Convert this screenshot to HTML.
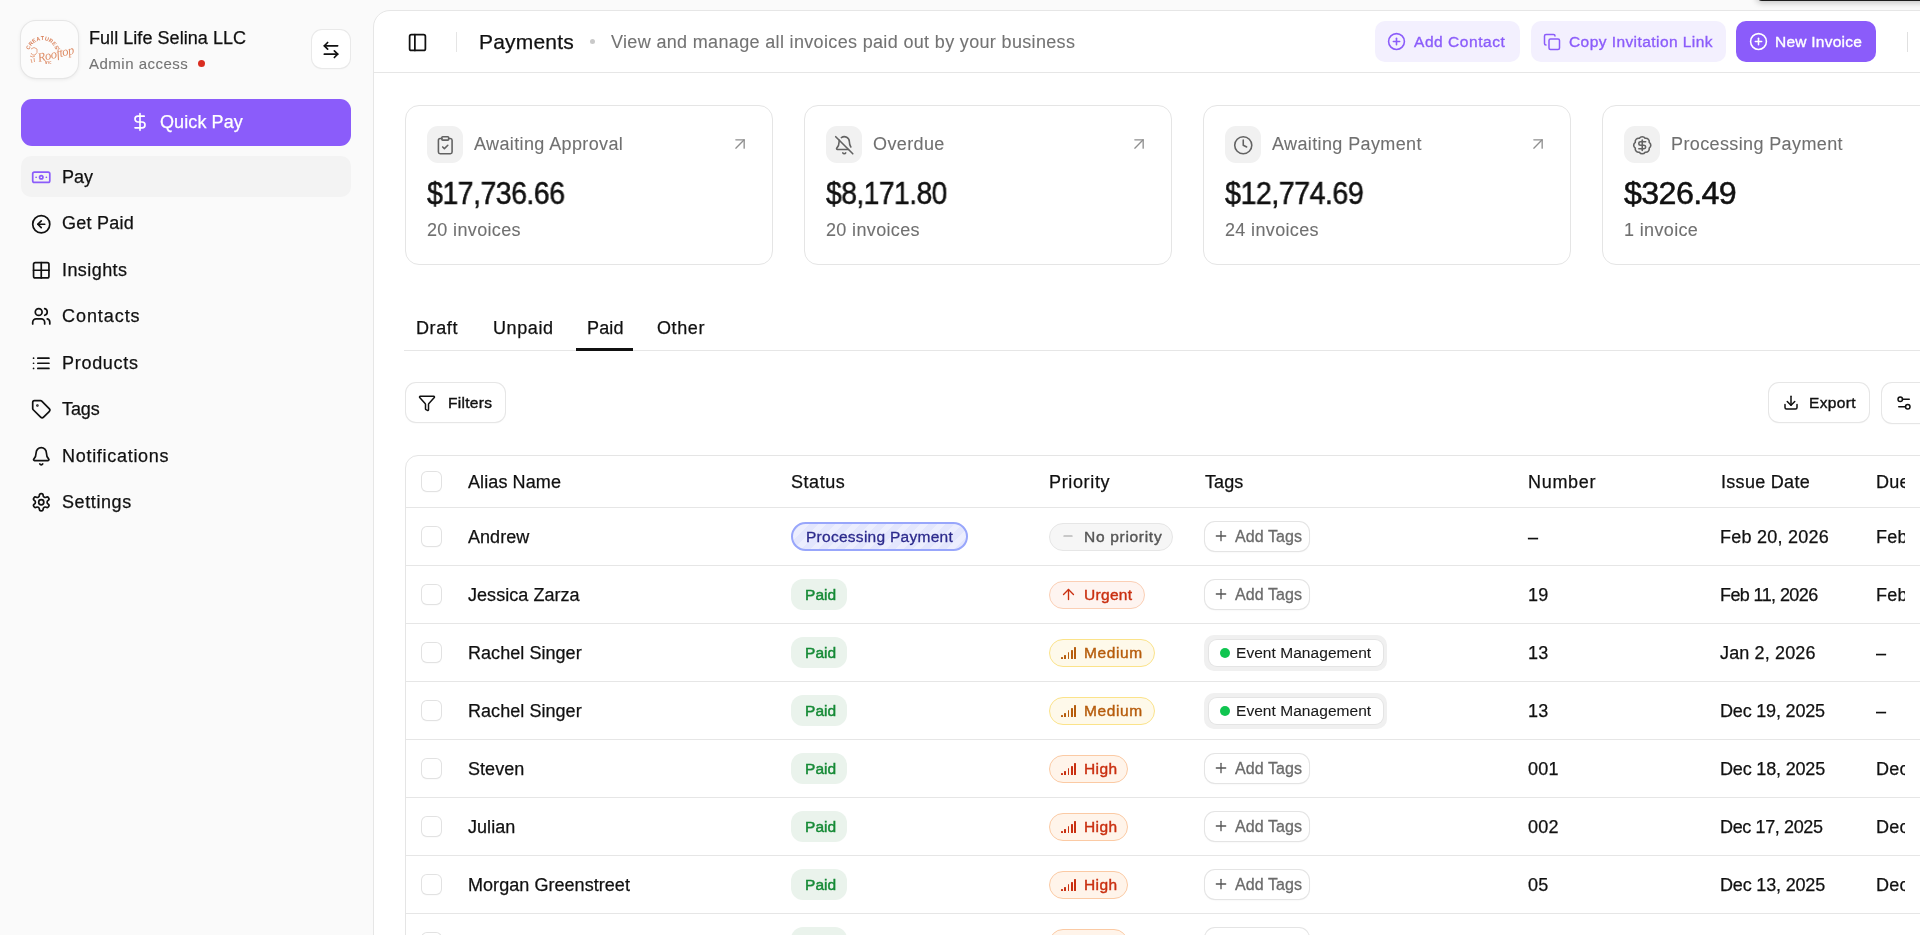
<!DOCTYPE html>
<html><head><meta charset="utf-8"><title>Payments</title>
<style>
html,body{margin:0;padding:0;}
body{width:1920px;height:935px;overflow:hidden;position:relative;background:#fafafa;font-family:"Liberation Sans", sans-serif;}
.a{position:absolute;}
.t{white-space:nowrap;will-change:transform;-webkit-text-stroke-width:0.25px;}
svg{display:block;}
</style></head><body>
<div class="a" style="left:21px;top:21px;width:57px;height:57px;background:#fcfcfc;border-radius:15px;box-shadow:0 0 0 1px #e6e6e6,0 1px 4px rgba(0,0,0,.10)"></div>
<div class="a" style="left:21px;top:21px;width:57px;height:57px;will-change:transform">
<svg width="57" height="57" viewBox="0 0 57 57">
<text x="9.10" y="27.15" transform="rotate(-66.7 9.10 27.15)" text-anchor="middle" font-family="Liberation Sans" font-weight="bold" font-size="5.4" fill="#d9805a">C</text>
<text x="11.16" y="23.82" transform="rotate(-50.0 11.16 23.82)" text-anchor="middle" font-family="Liberation Sans" font-weight="bold" font-size="5.4" fill="#d9805a">R</text>
<text x="14.08" y="21.22" transform="rotate(-33.3 14.08 21.22)" text-anchor="middle" font-family="Liberation Sans" font-weight="bold" font-size="5.4" fill="#d9805a">E</text>
<text x="17.63" y="19.57" transform="rotate(-16.7 17.63 19.57)" text-anchor="middle" font-family="Liberation Sans" font-weight="bold" font-size="5.4" fill="#d9805a">A</text>
<text x="21.50" y="19.00" transform="rotate(0.0 21.50 19.00)" text-anchor="middle" font-family="Liberation Sans" font-weight="bold" font-size="5.4" fill="#d9805a">T</text>
<text x="25.37" y="19.57" transform="rotate(16.7 25.37 19.57)" text-anchor="middle" font-family="Liberation Sans" font-weight="bold" font-size="5.4" fill="#d9805a">U</text>
<text x="28.92" y="21.22" transform="rotate(33.3 28.92 21.22)" text-anchor="middle" font-family="Liberation Sans" font-weight="bold" font-size="5.4" fill="#d9805a">R</text>
<text x="31.84" y="23.82" transform="rotate(50.0 31.84 23.82)" text-anchor="middle" font-family="Liberation Sans" font-weight="bold" font-size="5.4" fill="#d9805a">E</text>
<text x="33.90" y="27.15" transform="rotate(66.7 33.90 27.15)" text-anchor="middle" font-family="Liberation Sans" font-weight="bold" font-size="5.4" fill="#d9805a">S</text>
<text x="16.5" y="37.5" font-family="Liberation Serif" font-style="italic" font-size="12.5" fill="#de8d66" transform="rotate(-13 32 34)" letter-spacing="-0.4">Rooftop</text>
<path d="M10 28 q3 -3 6 0 q1 4 -2 6 q-3 1 -4 -2 M9 35 q3 2 5 0 M10 38 l1 4 M13 37 l0.5 4" fill="none" stroke="#e6a686" stroke-width="1"/>
<text x="24" y="43" font-family="Liberation Sans" font-weight="bold" font-size="3" fill="#d9805a">NYC</text>
</svg></div>
<div class="a t" style="left:89px;top:26.76px;font-size:18px;line-height:22px;color:#111;letter-spacing:0.05px;font-weight:400;">Full Life Selina LLC</div>
<div class="a t" style="left:89px;top:54.80px;font-size:15px;line-height:18px;color:#737373;letter-spacing:0.5px;font-weight:400;-webkit-text-stroke:0.1px #737373;">Admin access</div>
<div class="a" style="left:197.5px;top:59.5px;width:7.5px;height:7.5px;background:#d92d20;border-radius:50%"></div>
<div class="a" style="left:312px;top:30px;width:38px;height:38px;background:#fff;border-radius:10px;box-shadow:0 0 0 1px #e9e9e9,0 1px 2px rgba(0,0,0,.06)"></div>
<div class="a" style="left:321px;top:39.7px;width:20px;height:20px;color:#111"><svg width="20" height="20" viewBox="0 0 24 24" fill="none" stroke="currentColor" stroke-width="2" stroke-linecap="round" stroke-linejoin="round" ><path d="M8 3 4 7l4 4"/><path d="M4 7h16"/><path d="m16 21 4-4-4-4"/><path d="M20 17H4"/></svg></div>
<div class="a" style="left:21px;top:99px;width:330px;height:46.8px;background:#8b5cfa;border-radius:11px"></div>
<div class="a" style="left:130px;top:112px;width:20px;height:20px;color:#fff"><svg width="20" height="20" viewBox="0 0 24 24" fill="none" stroke="currentColor" stroke-width="2" stroke-linecap="round" stroke-linejoin="round" ><path d="M12 2v20"/><path d="M17 5H9.5a3.5 3.5 0 0 0 0 7h5a3.5 3.5 0 0 1 0 7H6"/></svg></div>
<div class="a t" style="left:160px;top:111.46px;font-size:18px;line-height:22px;color:#fff;letter-spacing:0.1px;font-weight:400;">Quick Pay</div>
<div class="a" style="left:21px;top:156px;width:330px;height:41px;background:#f3f3f3;border-radius:10px"></div>
<div class="a" style="left:31px;top:166.7px;width:20.5px;height:20.5px;color:#8b5cfa"><svg width="20.5" height="20.5" viewBox="0 0 24 24" fill="none" stroke="currentColor" stroke-width="2" stroke-linecap="round" stroke-linejoin="round" ><rect width="20" height="12" x="2" y="6" rx="2"/><circle cx="12" cy="12" r="2"/><path d="M6 12h.01M18 12h.01"/></svg></div>
<div class="a t" style="left:62px;top:165.96px;font-size:18px;line-height:22px;color:#111;letter-spacing:-0.05px;font-weight:400;">Pay</div>
<div class="a" style="left:31px;top:213.7px;width:20.5px;height:20.5px;color:#111"><svg width="20.5" height="20.5" viewBox="0 0 24 24" fill="none" stroke="currentColor" stroke-width="2" stroke-linecap="round" stroke-linejoin="round" ><circle cx="12" cy="12" r="10"/><path d="M16 12H8"/><path d="m12 8-4 4 4 4"/></svg></div>
<div class="a t" style="left:62px;top:212.42px;font-size:18px;line-height:22px;color:#111;letter-spacing:0.24px;font-weight:400;">Get Paid</div>
<div class="a" style="left:31px;top:259.7px;width:20.5px;height:20.5px;color:#111"><svg width="20.5" height="20.5" viewBox="0 0 24 24" fill="none" stroke="currentColor" stroke-width="2" stroke-linecap="round" stroke-linejoin="round" ><rect width="18" height="18" x="3" y="3" rx="2"/><path d="M3 12h18"/><path d="M12 3v18"/></svg></div>
<div class="a t" style="left:62px;top:258.88px;font-size:18px;line-height:22px;color:#111;letter-spacing:0.43px;font-weight:400;">Insights</div>
<div class="a" style="left:31px;top:305.7px;width:20.5px;height:20.5px;color:#111"><svg width="20.5" height="20.5" viewBox="0 0 24 24" fill="none" stroke="currentColor" stroke-width="2" stroke-linecap="round" stroke-linejoin="round" ><path d="M16 21v-2a4 4 0 0 0-4-4H6a4 4 0 0 0-4 4v2"/><circle cx="9" cy="7" r="4"/><path d="M22 21v-2a4 4 0 0 0-3-3.87"/><path d="M16 3.13a4 4 0 0 1 0 7.75"/></svg></div>
<div class="a t" style="left:62px;top:305.34px;font-size:18px;line-height:22px;color:#111;letter-spacing:0.94px;font-weight:400;">Contacts</div>
<div class="a" style="left:31px;top:352.7px;width:20.5px;height:20.5px;color:#111"><svg width="20.5" height="20.5" viewBox="0 0 24 24" fill="none" stroke="currentColor" stroke-width="2" stroke-linecap="round" stroke-linejoin="round" ><path d="M3 12h.01"/><path d="M3 18h.01"/><path d="M3 6h.01"/><path d="M8 12h13"/><path d="M8 18h13"/><path d="M8 6h13"/></svg></div>
<div class="a t" style="left:62px;top:351.80px;font-size:18px;line-height:22px;color:#111;letter-spacing:0.71px;font-weight:400;">Products</div>
<div class="a" style="left:31px;top:398.7px;width:20.5px;height:20.5px;color:#111"><svg width="20.5" height="20.5" viewBox="0 0 24 24" fill="none" stroke="currentColor" stroke-width="2" stroke-linecap="round" stroke-linejoin="round" ><path d="M12.586 2.586A2 2 0 0 0 11.172 2H4a2 2 0 0 0-2 2v7.172a2 2 0 0 0 .586 1.414l8.704 8.704a2.426 2.426 0 0 0 3.42 0l6.58-6.58a2.426 2.426 0 0 0 0-3.42z"/><circle cx="7.5" cy="7.5" r=".5" fill="currentColor"/></svg></div>
<div class="a t" style="left:62px;top:398.26px;font-size:18px;line-height:22px;color:#111;letter-spacing:-0.07px;font-weight:400;">Tags</div>
<div class="a" style="left:31px;top:445.7px;width:20.5px;height:20.5px;color:#111"><svg width="20.5" height="20.5" viewBox="0 0 24 24" fill="none" stroke="currentColor" stroke-width="2" stroke-linecap="round" stroke-linejoin="round" ><path d="M10.268 21a2 2 0 0 0 3.464 0"/><path d="M3.262 15.326A1 1 0 0 0 4 17h16a1 1 0 0 0 .74-1.673C19.41 13.956 18 12.499 18 8A6 6 0 0 0 6 8c0 4.499-1.411 5.956-2.738 7.326"/></svg></div>
<div class="a t" style="left:62px;top:444.72px;font-size:18px;line-height:22px;color:#111;letter-spacing:0.71px;font-weight:400;">Notifications</div>
<div class="a" style="left:31px;top:491.7px;width:20.5px;height:20.5px;color:#111"><svg width="20.5" height="20.5" viewBox="0 0 24 24" fill="none" stroke="currentColor" stroke-width="2" stroke-linecap="round" stroke-linejoin="round" ><path d="M12.22 2h-.44a2 2 0 0 0-2 2v.18a2 2 0 0 1-1 1.73l-.43.25a2 2 0 0 1-2 0l-.15-.08a2 2 0 0 0-2.73.73l-.22.38a2 2 0 0 0 .73 2.73l.15.1a2 2 0 0 1 1 1.72v.51a2 2 0 0 1-1 1.74l-.15.09a2 2 0 0 0-.73 2.73l.22.38a2 2 0 0 0 2.73.73l.15-.08a2 2 0 0 1 2 0l.43.25a2 2 0 0 1 1 1.73V20a2 2 0 0 0 2 2h.44a2 2 0 0 0 2-2v-.18a2 2 0 0 1 1-1.73l.43-.25a2 2 0 0 1 2 0l.15.08a2 2 0 0 0 2.73-.73l.22-.39a2 2 0 0 0-.73-2.73l-.15-.08a2 2 0 0 1-1-1.74v-.5a2 2 0 0 1 1-1.74l.15-.09a2 2 0 0 0 .73-2.73l-.22-.38a2 2 0 0 0-2.73-.73l-.15.08a2 2 0 0 1-2 0l-.43-.25a2 2 0 0 1-1-1.73V4a2 2 0 0 0-2-2z"/><circle cx="12" cy="12" r="3"/></svg></div>
<div class="a t" style="left:62px;top:491.18px;font-size:18px;line-height:22px;color:#111;letter-spacing:0.59px;font-weight:400;">Settings</div>
<div class="a" style="left:372.6px;top:10px;width:1600px;height:1000px;background:#fff;border:1.4px solid #e6e6e6;border-top-left-radius:17px;box-sizing:border-box"></div>
<div class="a" style="left:374px;top:71.8px;width:1546px;height:1.5px;background:#e6e6e6"></div>
<div class="a" style="left:406.5px;top:31.5px;width:21px;height:21px;color:#111"><svg width="21" height="21" viewBox="0 0 24 24" fill="none" stroke="currentColor" stroke-width="2" stroke-linecap="round" stroke-linejoin="round" ><rect x="3" y="3" width="18" height="18" rx="2"/><path d="M9 3v18"/></svg></div>
<div class="a" style="left:456px;top:32px;width:1px;height:20px;background:#e5e5e5"></div>
<div class="a t" style="left:478.5px;top:29.02px;font-size:21px;line-height:25px;color:#111;letter-spacing:0.2px;font-weight:400;">Payments</div>
<div class="a" style="left:590px;top:39px;width:5px;height:5px;background:#c9c9c9;border-radius:50%"></div>
<div class="a t" style="left:611px;top:31.26px;font-size:18px;line-height:22px;color:#737373;letter-spacing:0.34px;font-weight:400;-webkit-text-stroke:0.1px #737373;">View and manage all invoices paid out by your business</div>
<div class="a" style="left:1375px;top:21px;width:145px;height:41px;background:#f3f0fe;border-radius:10px"></div>
<div class="a" style="left:1387px;top:32px;width:19px;height:19px;color:#8b5cfa"><svg width="19" height="19" viewBox="0 0 24 24" fill="none" stroke="currentColor" stroke-width="2" stroke-linecap="round" stroke-linejoin="round" ><circle cx="12" cy="12" r="10"/><path d="M8 12h8"/><path d="M12 8v8"/></svg></div>
<div class="a t" style="left:1414px;top:32.13px;font-size:15.5px;line-height:19px;color:#8b5cfa;letter-spacing:0.55px;font-weight:400;-webkit-text-stroke:0.35px #8b5cfa;">Add Contact</div>
<div class="a" style="left:1531px;top:21px;width:195px;height:41px;background:#f3f0fe;border-radius:10px"></div>
<div class="a" style="left:1543px;top:33px;width:18px;height:18px;color:#8b5cfa"><svg width="18" height="18" viewBox="0 0 24 24" fill="none" stroke="currentColor" stroke-width="2" stroke-linecap="round" stroke-linejoin="round" ><rect width="14" height="14" x="8" y="8" rx="2"/><path d="M4 16c-1.1 0-2-.9-2-2V4c0-1.1.9-2 2-2h10c1.1 0 2 .9 2 2"/></svg></div>
<div class="a t" style="left:1569px;top:32.13px;font-size:15.5px;line-height:19px;color:#8b5cfa;letter-spacing:0.43px;font-weight:400;-webkit-text-stroke:0.35px #8b5cfa;">Copy Invitation Link</div>
<div class="a" style="left:1736px;top:21px;width:140px;height:41px;background:#8b5cfa;border-radius:10px"></div>
<div class="a" style="left:1749px;top:32px;width:19px;height:19px;color:#fff"><svg width="19" height="19" viewBox="0 0 24 24" fill="none" stroke="currentColor" stroke-width="2" stroke-linecap="round" stroke-linejoin="round" ><circle cx="12" cy="12" r="10"/><path d="M8 12h8"/><path d="M12 8v8"/></svg></div>
<div class="a t" style="left:1775px;top:32.13px;font-size:15.5px;line-height:19px;color:#fff;letter-spacing:0.24px;font-weight:400;-webkit-text-stroke:0.35px #fff;">New Invoice</div>
<div class="a" style="left:1907px;top:32px;width:1px;height:20px;background:#e0e0e0"></div>
<div class="a" style="left:1756px;top:-40px;width:200px;height:41.2px;background:#1c1c1c;border-radius:6px;box-shadow:0 2px 6px rgba(0,0,0,.22)"></div>
<div class="a" style="left:404.6px;top:104.6px;width:368.2px;height:160.4px;background:#fff;border:1.5px solid #e5e5e5;border-radius:14px;box-sizing:border-box"></div>
<div class="a" style="left:426.5px;top:126px;width:36.5px;height:36.8px;background:#f1f1f1;border-radius:11px"></div>
<div class="a" style="left:434.5px;top:134.6px;width:20.5px;height:20.5px;color:#626262"><svg width="20.5" height="20.5" viewBox="0 0 24 24" fill="none" stroke="currentColor" stroke-width="1.85" stroke-linecap="round" stroke-linejoin="round" ><rect width="8" height="4" x="8" y="2" rx="1"/><path d="M16 4h2a2 2 0 0 1 2 2v14a2 2 0 0 1-2 2H6a2 2 0 0 1-2-2V6a2 2 0 0 1 2-2h2"/><path d="m9 14 2 2 4-4"/></svg></div>
<div class="a t" style="left:473.5px;top:133.26px;font-size:18px;line-height:22px;color:#707070;letter-spacing:0.38px;font-weight:400;-webkit-text-stroke:0.1px #707070;">Awaiting Approval</div>
<div class="a" style="left:730px;top:134px;width:20px;height:20px;color:#8f8f8f"><svg width="20" height="20" viewBox="0 0 24 24" fill="none" stroke="currentColor" stroke-width="1.6" stroke-linecap="round" stroke-linejoin="round" ><path d="M7 7h10v10"/><path d="M7 17 17 7"/></svg></div>
<div class="a t" style="left:427px;top:174.76px;font-size:31px;line-height:37px;color:#111;letter-spacing:-0.6px;font-weight:400;-webkit-text-stroke:0.5px #111;transform:scaleX(0.922);transform-origin:0 0;">$17,736.66</div>
<div class="a t" style="left:427px;top:218.76px;font-size:18px;line-height:22px;color:#707070;letter-spacing:0.35px;font-weight:400;-webkit-text-stroke:0.1px #707070;">20 invoices</div>
<div class="a" style="left:803.6px;top:104.6px;width:368.2px;height:160.4px;background:#fff;border:1.5px solid #e5e5e5;border-radius:14px;box-sizing:border-box"></div>
<div class="a" style="left:825.5px;top:126px;width:36.5px;height:36.8px;background:#f1f1f1;border-radius:11px"></div>
<div class="a" style="left:833.5px;top:134.6px;width:20.5px;height:20.5px;color:#626262"><svg width="20.5" height="20.5" viewBox="0 0 24 24" fill="none" stroke="currentColor" stroke-width="1.85" stroke-linecap="round" stroke-linejoin="round" ><path d="M10.268 21a2 2 0 0 0 3.464 0"/><path d="M17 17H4a1 1 0 0 1-.74-1.673C4.59 13.956 6 12.499 6 8a6 6 0 0 1 .258-1.742"/><path d="m2 2 20 20"/><path d="M8.668 3.01A6 6 0 0 1 18 8c0 2.687.77 4.653 1.707 6.05"/></svg></div>
<div class="a t" style="left:872.5px;top:133.26px;font-size:18px;line-height:22px;color:#707070;letter-spacing:0.38px;font-weight:400;-webkit-text-stroke:0.1px #707070;">Overdue</div>
<div class="a" style="left:1129px;top:134px;width:20px;height:20px;color:#8f8f8f"><svg width="20" height="20" viewBox="0 0 24 24" fill="none" stroke="currentColor" stroke-width="1.6" stroke-linecap="round" stroke-linejoin="round" ><path d="M7 7h10v10"/><path d="M7 17 17 7"/></svg></div>
<div class="a t" style="left:826px;top:174.76px;font-size:31px;line-height:37px;color:#111;letter-spacing:-0.6px;font-weight:400;-webkit-text-stroke:0.5px #111;transform:scaleX(0.912);transform-origin:0 0;">$8,171.80</div>
<div class="a t" style="left:826px;top:218.76px;font-size:18px;line-height:22px;color:#707070;letter-spacing:0.35px;font-weight:400;-webkit-text-stroke:0.1px #707070;">20 invoices</div>
<div class="a" style="left:1202.6px;top:104.6px;width:368.2px;height:160.4px;background:#fff;border:1.5px solid #e5e5e5;border-radius:14px;box-sizing:border-box"></div>
<div class="a" style="left:1224.5px;top:126px;width:36.5px;height:36.8px;background:#f1f1f1;border-radius:11px"></div>
<div class="a" style="left:1232.5px;top:134.6px;width:20.5px;height:20.5px;color:#626262"><svg width="20.5" height="20.5" viewBox="0 0 24 24" fill="none" stroke="currentColor" stroke-width="1.85" stroke-linecap="round" stroke-linejoin="round" ><circle cx="12" cy="12" r="10"/><path d="M12 6v6l4 2"/></svg></div>
<div class="a t" style="left:1271.5px;top:133.26px;font-size:18px;line-height:22px;color:#707070;letter-spacing:0.38px;font-weight:400;-webkit-text-stroke:0.1px #707070;">Awaiting Payment</div>
<div class="a" style="left:1528px;top:134px;width:20px;height:20px;color:#8f8f8f"><svg width="20" height="20" viewBox="0 0 24 24" fill="none" stroke="currentColor" stroke-width="1.6" stroke-linecap="round" stroke-linejoin="round" ><path d="M7 7h10v10"/><path d="M7 17 17 7"/></svg></div>
<div class="a t" style="left:1225px;top:174.76px;font-size:31px;line-height:37px;color:#111;letter-spacing:-0.6px;font-weight:400;-webkit-text-stroke:0.5px #111;transform:scaleX(0.927);transform-origin:0 0;">$12,774.69</div>
<div class="a t" style="left:1225px;top:218.76px;font-size:18px;line-height:22px;color:#707070;letter-spacing:0.35px;font-weight:400;-webkit-text-stroke:0.1px #707070;">24 invoices</div>
<div class="a" style="left:1601.6px;top:104.6px;width:368.2px;height:160.4px;background:#fff;border:1.5px solid #e5e5e5;border-radius:14px;box-sizing:border-box"></div>
<div class="a" style="left:1623.5px;top:126px;width:36.5px;height:36.8px;background:#f1f1f1;border-radius:11px"></div>
<div class="a" style="left:1631.5px;top:134.6px;width:20.5px;height:20.5px;color:#626262"><svg width="20.5" height="20.5" viewBox="0 0 24 24" fill="none" stroke="currentColor" stroke-width="1.85" stroke-linecap="round" stroke-linejoin="round" ><path d="M3.85 8.62a4 4 0 0 1 4.78-4.77 4 4 0 0 1 6.74 0 4 4 0 0 1 4.78 4.78 4 4 0 0 1 0 6.74 4 4 0 0 1-4.77 4.78 4 4 0 0 1-6.75 0 4 4 0 0 1-4.78-4.77 4 4 0 0 1 0-6.76Z"/><path d="M16 8h-6a2 2 0 1 0 0 4h4a2 2 0 1 1 0 4H8"/><path d="M12 18V6"/></svg></div>
<div class="a t" style="left:1670.5px;top:133.26px;font-size:18px;line-height:22px;color:#707070;letter-spacing:0.38px;font-weight:400;-webkit-text-stroke:0.1px #707070;">Processing Payment</div>
<div class="a t" style="left:1624px;top:174.76px;font-size:31px;line-height:37px;color:#111;letter-spacing:-0.6px;font-weight:400;-webkit-text-stroke:0.5px #111;transform:scaleX(1.04);transform-origin:0 0;">$326.49</div>
<div class="a t" style="left:1624px;top:218.76px;font-size:18px;line-height:22px;color:#707070;letter-spacing:0.35px;font-weight:400;-webkit-text-stroke:0.1px #707070;">1 invoice</div>
<div class="a t" style="left:416px;top:317.26px;font-size:18px;line-height:22px;color:#111;letter-spacing:0.6px;font-weight:400;">Draft</div>
<div class="a t" style="left:493px;top:317.26px;font-size:18px;line-height:22px;color:#111;letter-spacing:0.6px;font-weight:400;">Unpaid</div>
<div class="a t" style="left:586.5px;top:317.26px;font-size:18px;line-height:22px;color:#111;letter-spacing:0.15px;font-weight:400;">Paid</div>
<div class="a t" style="left:657px;top:317.26px;font-size:18px;line-height:22px;color:#111;letter-spacing:0.6px;font-weight:400;">Other</div>
<div class="a" style="left:404px;top:349.8px;width:1516px;height:1.5px;background:#e6e6e6"></div>
<div class="a" style="left:576px;top:348px;width:57px;height:3px;background:#111"></div>
<div class="a" style="left:406px;top:383px;width:99px;height:39px;background:#fff;border-radius:10px;box-shadow:0 0 0 1px #e6e6e6,0 1px 2px rgba(0,0,0,.07)"></div>
<div class="a" style="left:418px;top:394px;width:18px;height:18px;color:#111"><svg width="18" height="18" viewBox="0 0 24 24" fill="none" stroke="currentColor" stroke-width="2" stroke-linecap="round" stroke-linejoin="round" ><path d="M10 20a1 1 0 0 0 .553.895l2 1A1 1 0 0 0 14 21v-7a2 2 0 0 1 .517-1.341L21.74 4.67A1 1 0 0 0 21 3H3a1 1 0 0 0-.742 1.67l7.225 7.989A2 2 0 0 1 10 14z"/></svg></div>
<div class="a t" style="left:447.5px;top:393.33px;font-size:15.5px;line-height:19px;color:#111;letter-spacing:0.3px;font-weight:400;-webkit-text-stroke:0.4px #111;">Filters</div>
<div class="a" style="left:1769px;top:383px;width:100px;height:39px;background:#fff;border-radius:10px;box-shadow:0 0 0 1px #e6e6e6,0 1px 2px rgba(0,0,0,.07)"></div>
<div class="a" style="left:1782px;top:394px;width:18px;height:18px;color:#111"><svg width="18" height="18" viewBox="0 0 24 24" fill="none" stroke="currentColor" stroke-width="2" stroke-linecap="round" stroke-linejoin="round" ><path d="M12 3v12"/><path d="m7 10 5 5 5-5"/><path d="M4 14v4a2 2 0 0 0 2 2h12a2 2 0 0 0 2-2v-4"/></svg></div>
<div class="a t" style="left:1809px;top:393.33px;font-size:15.5px;line-height:19px;color:#111;letter-spacing:0.35px;font-weight:400;-webkit-text-stroke:0.4px #111;">Export</div>
<div class="a" style="left:1882px;top:383px;width:80px;height:40px;background:#fff;border-radius:10px;box-shadow:0 0 0 1px #e6e6e6,0 1px 2px rgba(0,0,0,.07)"></div>
<div class="a" style="left:1895px;top:394px;width:18px;height:18px;color:#111"><svg width="18" height="18" viewBox="0 0 24 24" fill="none" stroke="currentColor" stroke-width="2" stroke-linecap="round" stroke-linejoin="round" ><path d="M14 17H5"/><path d="M19 7h-9"/><circle cx="17" cy="17" r="3"/><circle cx="7" cy="7" r="3"/></svg></div>
<div class="a" style="left:404.5px;top:455px;width:1600px;height:700px;background:#fff;border:1.5px solid #e5e5e5;border-top-left-radius:13px;box-sizing:border-box"></div>
<div class="a" style="left:406px;top:506.8px;width:1514px;height:1.5px;background:#e6e6e6"></div>
<div class="a" style="left:406px;top:564.8px;width:1514px;height:1.5px;background:#e6e6e6"></div>
<div class="a" style="left:406px;top:622.8px;width:1514px;height:1.5px;background:#e6e6e6"></div>
<div class="a" style="left:406px;top:680.8px;width:1514px;height:1.5px;background:#e6e6e6"></div>
<div class="a" style="left:406px;top:738.8px;width:1514px;height:1.5px;background:#e6e6e6"></div>
<div class="a" style="left:406px;top:796.8px;width:1514px;height:1.5px;background:#e6e6e6"></div>
<div class="a" style="left:406px;top:854.8px;width:1514px;height:1.5px;background:#e6e6e6"></div>
<div class="a" style="left:406px;top:912.8px;width:1514px;height:1.5px;background:#e6e6e6"></div>
<div class="a" style="left:422px;top:472px;width:19px;height:19px;background:#fff;border-radius:5px;box-shadow:0 0 0 1px #e2e2e2,0 1px 2px rgba(0,0,0,.07)"></div>
<div class="a t" style="left:467.8px;top:470.76px;font-size:18px;line-height:22px;color:#111;letter-spacing:0.1px;font-weight:400;">Alias Name</div>
<div class="a t" style="left:791px;top:470.76px;font-size:18px;line-height:22px;color:#111;letter-spacing:0.55px;font-weight:400;">Status</div>
<div class="a t" style="left:1049px;top:470.76px;font-size:18px;line-height:22px;color:#111;letter-spacing:0.65px;font-weight:400;">Priority</div>
<div class="a t" style="left:1205px;top:470.76px;font-size:18px;line-height:22px;color:#111;letter-spacing:0.1px;font-weight:400;">Tags</div>
<div class="a t" style="left:1527.5px;top:470.76px;font-size:18px;line-height:22px;color:#111;letter-spacing:0.7px;font-weight:400;">Number</div>
<div class="a t" style="left:1721px;top:470.76px;font-size:18px;line-height:22px;color:#111;letter-spacing:0.3px;font-weight:400;">Issue Date</div>
<div class="a" style="left:1876px;top:466px;width:29px;height:30px;overflow:hidden"><div class="a t" style="left:0px;top:4.76px;font-size:18px;line-height:22px;color:#111;letter-spacing:0.3px;font-weight:400;">Due</div></div>
<div class="a" style="left:422px;top:527px;width:19px;height:19px;background:#fff;border-radius:5px;box-shadow:0 0 0 1px #e2e2e2,0 1px 2px rgba(0,0,0,.07)"></div>
<div class="a t" style="left:467.6px;top:525.76px;font-size:18px;line-height:22px;color:#111;letter-spacing:0.05px;font-weight:400;">Andrew</div>
<div class="a" style="left:791px;top:522px;width:177px;height:29px;border-radius:15px;border:2px solid #98a6fb;box-sizing:border-box;background:repeating-linear-gradient(135deg,#e3e6fd 0 6px,#eceefe 6px 12px)"></div>
<div class="a t" style="left:806px;top:527.13px;font-size:15.5px;line-height:19px;color:#2c2a8c;letter-spacing:0.27px;font-weight:400;-webkit-text-stroke:0.3px #2c2a8c;">Processing Payment</div>
<div class="a" style="left:1049px;top:522.5px;width:124px;height:28.5px;background:#f6f6f6;border:1.5px solid #e6e6e6;border-radius:15px;box-sizing:border-box"></div>
<div class="a" style="left:1061px;top:529px;width:14px;height:14px;color:#9a9a9a"><svg width="14" height="14" viewBox="0 0 24 24" fill="none" stroke="currentColor" stroke-width="2" stroke-linecap="round" stroke-linejoin="round" ><path d="M5 12h14"/></svg></div>
<div class="a t" style="left:1083.5px;top:527.33px;font-size:15.5px;line-height:19px;color:#555;letter-spacing:0.7px;font-weight:400;-webkit-text-stroke:0.4px #555;">No priority</div>
<div class="a" style="left:1205px;top:522px;width:104px;height:29px;background:#fff;border-radius:10px;box-shadow:0 0 0 1px #e4e4e4,0 1px 2px rgba(0,0,0,.08)"></div>
<div class="a" style="left:1213px;top:528px;width:16px;height:16px;color:#555"><svg width="16" height="16" viewBox="0 0 24 24" fill="none" stroke="currentColor" stroke-width="2" stroke-linecap="round" stroke-linejoin="round" ><path d="M5 12h14"/><path d="M12 5v14"/></svg></div>
<div class="a t" style="left:1234.5px;top:526.96px;font-size:16px;line-height:19px;color:#6b6b6b;letter-spacing:0.1px;font-weight:400;-webkit-text-stroke:0.3px #6b6b6b;">Add Tags</div>
<div class="a t" style="left:1527.5px;top:525.76px;font-size:18px;line-height:22px;color:#111;letter-spacing:0.2px;font-weight:400;">&ndash;</div>
<div class="a t" style="left:1720.2px;top:525.76px;font-size:18px;line-height:22px;color:#111;letter-spacing:0.25px;font-weight:400;">Feb 20, 2026</div>
<div class="a" style="left:1876px;top:521px;width:29px;height:30px;overflow:hidden"><div class="a t" style="left:0px;top:4.76px;font-size:18px;line-height:22px;color:#111;letter-spacing:0.2px;font-weight:400;">Feb</div></div>
<div class="a" style="left:422px;top:585px;width:19px;height:19px;background:#fff;border-radius:5px;box-shadow:0 0 0 1px #e2e2e2,0 1px 2px rgba(0,0,0,.07)"></div>
<div class="a t" style="left:467.6px;top:583.76px;font-size:18px;line-height:22px;color:#111;letter-spacing:0.05px;font-weight:400;">Jessica Zarza</div>
<div class="a" style="left:791px;top:579px;width:56px;height:31px;background:#eaf3ec;border-radius:12px"></div>
<div class="a t" style="left:804.5px;top:585.13px;font-size:15.5px;line-height:19px;color:#168a36;letter-spacing:0.05px;font-weight:400;-webkit-text-stroke:0.45px #168a36;">Paid</div>
<div class="a" style="left:1049px;top:580.5px;width:96px;height:28.5px;background:#fef4f0;border:1.5px solid #fbcfb5;border-radius:15px;box-sizing:border-box"></div>
<div class="a" style="left:1060px;top:586px;width:17px;height:17px;color:#c92f10"><svg width="17" height="17" viewBox="0 0 24 24" fill="none" stroke="currentColor" stroke-width="1.9" stroke-linecap="round" stroke-linejoin="round" ><path d="m5 12 7-7 7 7"/><path d="M12 19V5"/></svg></div>
<div class="a t" style="left:1083.6px;top:585.33px;font-size:15.5px;line-height:19px;color:#c92f10;letter-spacing:0.3px;font-weight:400;-webkit-text-stroke:0.4px #c92f10;">Urgent</div>
<div class="a" style="left:1205px;top:580px;width:104px;height:29px;background:#fff;border-radius:10px;box-shadow:0 0 0 1px #e4e4e4,0 1px 2px rgba(0,0,0,.08)"></div>
<div class="a" style="left:1213px;top:586px;width:16px;height:16px;color:#555"><svg width="16" height="16" viewBox="0 0 24 24" fill="none" stroke="currentColor" stroke-width="2" stroke-linecap="round" stroke-linejoin="round" ><path d="M5 12h14"/><path d="M12 5v14"/></svg></div>
<div class="a t" style="left:1234.5px;top:584.96px;font-size:16px;line-height:19px;color:#6b6b6b;letter-spacing:0.1px;font-weight:400;-webkit-text-stroke:0.3px #6b6b6b;">Add Tags</div>
<div class="a t" style="left:1527.5px;top:583.76px;font-size:18px;line-height:22px;color:#111;letter-spacing:0.2px;font-weight:400;">19</div>
<div class="a t" style="left:1720.2px;top:583.76px;font-size:18px;line-height:22px;color:#111;letter-spacing:-0.6px;font-weight:400;">Feb 11, 2026</div>
<div class="a" style="left:1876px;top:579px;width:29px;height:30px;overflow:hidden"><div class="a t" style="left:0px;top:4.76px;font-size:18px;line-height:22px;color:#111;letter-spacing:0.2px;font-weight:400;">Feb</div></div>
<div class="a" style="left:422px;top:643px;width:19px;height:19px;background:#fff;border-radius:5px;box-shadow:0 0 0 1px #e2e2e2,0 1px 2px rgba(0,0,0,.07)"></div>
<div class="a t" style="left:467.6px;top:641.76px;font-size:18px;line-height:22px;color:#111;letter-spacing:0.05px;font-weight:400;">Rachel Singer</div>
<div class="a" style="left:791px;top:637px;width:56px;height:31px;background:#eaf3ec;border-radius:12px"></div>
<div class="a t" style="left:804.5px;top:643.13px;font-size:15.5px;line-height:19px;color:#168a36;letter-spacing:0.05px;font-weight:400;-webkit-text-stroke:0.45px #168a36;">Paid</div>
<div class="a" style="left:1049px;top:639px;width:106px;height:28px;background:#fef9ea;border:1.5px solid #fbe38a;border-radius:15px;box-sizing:border-box"></div>
<div class="a" style="left:1061.20px;top:657.20px;width:1.6px;height:1.6px;background:#b65c0c;border-radius:0.5px"></div><div class="a" style="left:1064.45px;top:655.00px;width:1.6px;height:3.8px;background:#b65c0c;border-radius:0.5px"></div><div class="a" style="left:1067.70px;top:652.20px;width:1.6px;height:6.6px;background:#b65c0c;border-radius:0.5px"></div><div class="a" style="left:1070.95px;top:650.00px;width:1.6px;height:8.8px;background:#b65c0c;border-radius:0.5px"></div><div class="a" style="left:1074.20px;top:647.20px;width:1.6px;height:11.6px;background:#b65c0c;border-radius:0.5px"></div>
<div class="a t" style="left:1084px;top:643.33px;font-size:15.5px;line-height:19px;color:#b65c0c;letter-spacing:0.6px;font-weight:400;-webkit-text-stroke:0.4px #b65c0c;">Medium</div>
<div class="a" style="left:1204px;top:635px;width:183px;height:36px;background:#f0f0f0;border-radius:10px"></div>
<div class="a" style="left:1209px;top:640px;width:174px;height:26px;background:#fff;border-radius:8px;box-shadow:0 0 0 1px #e4e4e4"></div>
<div class="a" style="left:1220px;top:647.7px;width:10px;height:10px;background:#10c550;border-radius:50%"></div>
<div class="a t" style="left:1235.5px;top:643.33px;font-size:15.5px;line-height:19px;color:#1a1a1a;letter-spacing:0.05px;font-weight:400;-webkit-text-stroke:0.1px #1a1a1a;">Event Management</div>
<div class="a t" style="left:1527.5px;top:641.76px;font-size:18px;line-height:22px;color:#111;letter-spacing:0.2px;font-weight:400;">13</div>
<div class="a t" style="left:1720.2px;top:641.76px;font-size:18px;line-height:22px;color:#111;letter-spacing:0.14px;font-weight:400;">Jan 2, 2026</div>
<div class="a" style="left:1876px;top:637px;width:29px;height:30px;overflow:hidden"><div class="a t" style="left:0px;top:4.76px;font-size:18px;line-height:22px;color:#111;letter-spacing:0.2px;font-weight:400;">&ndash;</div></div>
<div class="a" style="left:422px;top:701px;width:19px;height:19px;background:#fff;border-radius:5px;box-shadow:0 0 0 1px #e2e2e2,0 1px 2px rgba(0,0,0,.07)"></div>
<div class="a t" style="left:467.6px;top:699.76px;font-size:18px;line-height:22px;color:#111;letter-spacing:0.05px;font-weight:400;">Rachel Singer</div>
<div class="a" style="left:791px;top:695px;width:56px;height:31px;background:#eaf3ec;border-radius:12px"></div>
<div class="a t" style="left:804.5px;top:701.13px;font-size:15.5px;line-height:19px;color:#168a36;letter-spacing:0.05px;font-weight:400;-webkit-text-stroke:0.45px #168a36;">Paid</div>
<div class="a" style="left:1049px;top:697px;width:106px;height:28px;background:#fef9ea;border:1.5px solid #fbe38a;border-radius:15px;box-sizing:border-box"></div>
<div class="a" style="left:1061.20px;top:715.20px;width:1.6px;height:1.6px;background:#b65c0c;border-radius:0.5px"></div><div class="a" style="left:1064.45px;top:713.00px;width:1.6px;height:3.8px;background:#b65c0c;border-radius:0.5px"></div><div class="a" style="left:1067.70px;top:710.20px;width:1.6px;height:6.6px;background:#b65c0c;border-radius:0.5px"></div><div class="a" style="left:1070.95px;top:708.00px;width:1.6px;height:8.8px;background:#b65c0c;border-radius:0.5px"></div><div class="a" style="left:1074.20px;top:705.20px;width:1.6px;height:11.6px;background:#b65c0c;border-radius:0.5px"></div>
<div class="a t" style="left:1084px;top:701.33px;font-size:15.5px;line-height:19px;color:#b65c0c;letter-spacing:0.6px;font-weight:400;-webkit-text-stroke:0.4px #b65c0c;">Medium</div>
<div class="a" style="left:1204px;top:693px;width:183px;height:36px;background:#f0f0f0;border-radius:10px"></div>
<div class="a" style="left:1209px;top:698px;width:174px;height:26px;background:#fff;border-radius:8px;box-shadow:0 0 0 1px #e4e4e4"></div>
<div class="a" style="left:1220px;top:705.7px;width:10px;height:10px;background:#10c550;border-radius:50%"></div>
<div class="a t" style="left:1235.5px;top:701.33px;font-size:15.5px;line-height:19px;color:#1a1a1a;letter-spacing:0.05px;font-weight:400;-webkit-text-stroke:0.1px #1a1a1a;">Event Management</div>
<div class="a t" style="left:1527.5px;top:699.76px;font-size:18px;line-height:22px;color:#111;letter-spacing:0.2px;font-weight:400;">13</div>
<div class="a t" style="left:1720.2px;top:699.76px;font-size:18px;line-height:22px;color:#111;letter-spacing:-0.18px;font-weight:400;">Dec 19, 2025</div>
<div class="a" style="left:1876px;top:695px;width:29px;height:30px;overflow:hidden"><div class="a t" style="left:0px;top:4.76px;font-size:18px;line-height:22px;color:#111;letter-spacing:0.2px;font-weight:400;">&ndash;</div></div>
<div class="a" style="left:422px;top:759px;width:19px;height:19px;background:#fff;border-radius:5px;box-shadow:0 0 0 1px #e2e2e2,0 1px 2px rgba(0,0,0,.07)"></div>
<div class="a t" style="left:467.6px;top:757.76px;font-size:18px;line-height:22px;color:#111;letter-spacing:0.05px;font-weight:400;">Steven</div>
<div class="a" style="left:791px;top:753px;width:56px;height:31px;background:#eaf3ec;border-radius:12px"></div>
<div class="a t" style="left:804.5px;top:759.13px;font-size:15.5px;line-height:19px;color:#168a36;letter-spacing:0.05px;font-weight:400;-webkit-text-stroke:0.45px #168a36;">Paid</div>
<div class="a" style="left:1049px;top:755px;width:79px;height:28px;background:#fff4ea;border:1.5px solid #fbcaa4;border-radius:15px;box-sizing:border-box"></div>
<div class="a" style="left:1061.20px;top:773.20px;width:1.6px;height:1.6px;background:#c92f10;border-radius:0.5px"></div><div class="a" style="left:1064.45px;top:771.00px;width:1.6px;height:3.8px;background:#c92f10;border-radius:0.5px"></div><div class="a" style="left:1067.70px;top:768.20px;width:1.6px;height:6.6px;background:#c92f10;border-radius:0.5px"></div><div class="a" style="left:1070.95px;top:766.00px;width:1.6px;height:8.8px;background:#c92f10;border-radius:0.5px"></div><div class="a" style="left:1074.20px;top:763.20px;width:1.6px;height:11.6px;background:#c92f10;border-radius:0.5px"></div>
<div class="a t" style="left:1083.8px;top:759.33px;font-size:15.5px;line-height:19px;color:#c92f10;letter-spacing:0.4px;font-weight:400;-webkit-text-stroke:0.4px #c92f10;">High</div>
<div class="a" style="left:1205px;top:754px;width:104px;height:29px;background:#fff;border-radius:10px;box-shadow:0 0 0 1px #e4e4e4,0 1px 2px rgba(0,0,0,.08)"></div>
<div class="a" style="left:1213px;top:760px;width:16px;height:16px;color:#555"><svg width="16" height="16" viewBox="0 0 24 24" fill="none" stroke="currentColor" stroke-width="2" stroke-linecap="round" stroke-linejoin="round" ><path d="M5 12h14"/><path d="M12 5v14"/></svg></div>
<div class="a t" style="left:1234.5px;top:758.96px;font-size:16px;line-height:19px;color:#6b6b6b;letter-spacing:0.1px;font-weight:400;-webkit-text-stroke:0.3px #6b6b6b;">Add Tags</div>
<div class="a t" style="left:1527.5px;top:757.76px;font-size:18px;line-height:22px;color:#111;letter-spacing:0.2px;font-weight:400;">001</div>
<div class="a t" style="left:1720.2px;top:757.76px;font-size:18px;line-height:22px;color:#111;letter-spacing:-0.17px;font-weight:400;">Dec 18, 2025</div>
<div class="a" style="left:1876px;top:753px;width:29px;height:30px;overflow:hidden"><div class="a t" style="left:0px;top:4.76px;font-size:18px;line-height:22px;color:#111;letter-spacing:0.2px;font-weight:400;">Dec</div></div>
<div class="a" style="left:422px;top:817px;width:19px;height:19px;background:#fff;border-radius:5px;box-shadow:0 0 0 1px #e2e2e2,0 1px 2px rgba(0,0,0,.07)"></div>
<div class="a t" style="left:467.6px;top:815.76px;font-size:18px;line-height:22px;color:#111;letter-spacing:0.05px;font-weight:400;">Julian</div>
<div class="a" style="left:791px;top:811px;width:56px;height:31px;background:#eaf3ec;border-radius:12px"></div>
<div class="a t" style="left:804.5px;top:817.13px;font-size:15.5px;line-height:19px;color:#168a36;letter-spacing:0.05px;font-weight:400;-webkit-text-stroke:0.45px #168a36;">Paid</div>
<div class="a" style="left:1049px;top:813px;width:79px;height:28px;background:#fff4ea;border:1.5px solid #fbcaa4;border-radius:15px;box-sizing:border-box"></div>
<div class="a" style="left:1061.20px;top:831.20px;width:1.6px;height:1.6px;background:#c92f10;border-radius:0.5px"></div><div class="a" style="left:1064.45px;top:829.00px;width:1.6px;height:3.8px;background:#c92f10;border-radius:0.5px"></div><div class="a" style="left:1067.70px;top:826.20px;width:1.6px;height:6.6px;background:#c92f10;border-radius:0.5px"></div><div class="a" style="left:1070.95px;top:824.00px;width:1.6px;height:8.8px;background:#c92f10;border-radius:0.5px"></div><div class="a" style="left:1074.20px;top:821.20px;width:1.6px;height:11.6px;background:#c92f10;border-radius:0.5px"></div>
<div class="a t" style="left:1083.8px;top:817.33px;font-size:15.5px;line-height:19px;color:#c92f10;letter-spacing:0.4px;font-weight:400;-webkit-text-stroke:0.4px #c92f10;">High</div>
<div class="a" style="left:1205px;top:812px;width:104px;height:29px;background:#fff;border-radius:10px;box-shadow:0 0 0 1px #e4e4e4,0 1px 2px rgba(0,0,0,.08)"></div>
<div class="a" style="left:1213px;top:818px;width:16px;height:16px;color:#555"><svg width="16" height="16" viewBox="0 0 24 24" fill="none" stroke="currentColor" stroke-width="2" stroke-linecap="round" stroke-linejoin="round" ><path d="M5 12h14"/><path d="M12 5v14"/></svg></div>
<div class="a t" style="left:1234.5px;top:816.96px;font-size:16px;line-height:19px;color:#6b6b6b;letter-spacing:0.1px;font-weight:400;-webkit-text-stroke:0.3px #6b6b6b;">Add Tags</div>
<div class="a t" style="left:1527.5px;top:815.76px;font-size:18px;line-height:22px;color:#111;letter-spacing:0.2px;font-weight:400;">002</div>
<div class="a t" style="left:1720.2px;top:815.76px;font-size:18px;line-height:22px;color:#111;letter-spacing:-0.37px;font-weight:400;">Dec 17, 2025</div>
<div class="a" style="left:1876px;top:811px;width:29px;height:30px;overflow:hidden"><div class="a t" style="left:0px;top:4.76px;font-size:18px;line-height:22px;color:#111;letter-spacing:0.2px;font-weight:400;">Dec</div></div>
<div class="a" style="left:422px;top:875px;width:19px;height:19px;background:#fff;border-radius:5px;box-shadow:0 0 0 1px #e2e2e2,0 1px 2px rgba(0,0,0,.07)"></div>
<div class="a t" style="left:467.6px;top:873.76px;font-size:18px;line-height:22px;color:#111;letter-spacing:0.05px;font-weight:400;">Morgan Greenstreet</div>
<div class="a" style="left:791px;top:869px;width:56px;height:31px;background:#eaf3ec;border-radius:12px"></div>
<div class="a t" style="left:804.5px;top:875.13px;font-size:15.5px;line-height:19px;color:#168a36;letter-spacing:0.05px;font-weight:400;-webkit-text-stroke:0.45px #168a36;">Paid</div>
<div class="a" style="left:1049px;top:871px;width:79px;height:28px;background:#fff4ea;border:1.5px solid #fbcaa4;border-radius:15px;box-sizing:border-box"></div>
<div class="a" style="left:1061.20px;top:889.20px;width:1.6px;height:1.6px;background:#c92f10;border-radius:0.5px"></div><div class="a" style="left:1064.45px;top:887.00px;width:1.6px;height:3.8px;background:#c92f10;border-radius:0.5px"></div><div class="a" style="left:1067.70px;top:884.20px;width:1.6px;height:6.6px;background:#c92f10;border-radius:0.5px"></div><div class="a" style="left:1070.95px;top:882.00px;width:1.6px;height:8.8px;background:#c92f10;border-radius:0.5px"></div><div class="a" style="left:1074.20px;top:879.20px;width:1.6px;height:11.6px;background:#c92f10;border-radius:0.5px"></div>
<div class="a t" style="left:1083.8px;top:875.33px;font-size:15.5px;line-height:19px;color:#c92f10;letter-spacing:0.4px;font-weight:400;-webkit-text-stroke:0.4px #c92f10;">High</div>
<div class="a" style="left:1205px;top:870px;width:104px;height:29px;background:#fff;border-radius:10px;box-shadow:0 0 0 1px #e4e4e4,0 1px 2px rgba(0,0,0,.08)"></div>
<div class="a" style="left:1213px;top:876px;width:16px;height:16px;color:#555"><svg width="16" height="16" viewBox="0 0 24 24" fill="none" stroke="currentColor" stroke-width="2" stroke-linecap="round" stroke-linejoin="round" ><path d="M5 12h14"/><path d="M12 5v14"/></svg></div>
<div class="a t" style="left:1234.5px;top:874.96px;font-size:16px;line-height:19px;color:#6b6b6b;letter-spacing:0.1px;font-weight:400;-webkit-text-stroke:0.3px #6b6b6b;">Add Tags</div>
<div class="a t" style="left:1527.5px;top:873.76px;font-size:18px;line-height:22px;color:#111;letter-spacing:0.2px;font-weight:400;">05</div>
<div class="a t" style="left:1720.2px;top:873.76px;font-size:18px;line-height:22px;color:#111;letter-spacing:-0.17px;font-weight:400;">Dec 13, 2025</div>
<div class="a" style="left:1876px;top:869px;width:29px;height:30px;overflow:hidden"><div class="a t" style="left:0px;top:4.76px;font-size:18px;line-height:22px;color:#111;letter-spacing:0.2px;font-weight:400;">Dec</div></div>
<div class="a" style="left:422px;top:933px;width:19px;height:19px;background:#fff;border-radius:5px;box-shadow:0 0 0 1px #e2e2e2,0 1px 2px rgba(0,0,0,.07)"></div>
<div class="a t" style="left:467.6px;top:931.76px;font-size:18px;line-height:22px;color:#111;letter-spacing:0.05px;font-weight:400;">Thomas</div>
<div class="a" style="left:791px;top:927px;width:56px;height:31px;background:#eaf3ec;border-radius:12px"></div>
<div class="a t" style="left:804.5px;top:933.13px;font-size:15.5px;line-height:19px;color:#168a36;letter-spacing:0.05px;font-weight:400;-webkit-text-stroke:0.45px #168a36;">Paid</div>
<div class="a" style="left:1049px;top:929px;width:79px;height:28px;background:#fff4ea;border:1.5px solid #fbcaa4;border-radius:15px;box-sizing:border-box"></div>
<div class="a" style="left:1061.20px;top:947.20px;width:1.6px;height:1.6px;background:#c92f10;border-radius:0.5px"></div><div class="a" style="left:1064.45px;top:945.00px;width:1.6px;height:3.8px;background:#c92f10;border-radius:0.5px"></div><div class="a" style="left:1067.70px;top:942.20px;width:1.6px;height:6.6px;background:#c92f10;border-radius:0.5px"></div><div class="a" style="left:1070.95px;top:940.00px;width:1.6px;height:8.8px;background:#c92f10;border-radius:0.5px"></div><div class="a" style="left:1074.20px;top:937.20px;width:1.6px;height:11.6px;background:#c92f10;border-radius:0.5px"></div>
<div class="a t" style="left:1083.8px;top:933.33px;font-size:15.5px;line-height:19px;color:#c92f10;letter-spacing:0.4px;font-weight:400;-webkit-text-stroke:0.4px #c92f10;">High</div>
<div class="a" style="left:1205px;top:928px;width:104px;height:29px;background:#fff;border-radius:10px;box-shadow:0 0 0 1px #e4e4e4,0 1px 2px rgba(0,0,0,.08)"></div>
<div class="a" style="left:1213px;top:934px;width:16px;height:16px;color:#555"><svg width="16" height="16" viewBox="0 0 24 24" fill="none" stroke="currentColor" stroke-width="2" stroke-linecap="round" stroke-linejoin="round" ><path d="M5 12h14"/><path d="M12 5v14"/></svg></div>
<div class="a t" style="left:1234.5px;top:932.96px;font-size:16px;line-height:19px;color:#6b6b6b;letter-spacing:0.1px;font-weight:400;-webkit-text-stroke:0.3px #6b6b6b;">Add Tags</div>
<div class="a t" style="left:1527.5px;top:931.76px;font-size:18px;line-height:22px;color:#111;letter-spacing:0.2px;font-weight:400;">04</div>
<div class="a t" style="left:1720.2px;top:931.76px;font-size:18px;line-height:22px;color:#111;letter-spacing:-0.17px;font-weight:400;">Dec 10, 2025</div>
<div class="a" style="left:1876px;top:927px;width:29px;height:30px;overflow:hidden"><div class="a t" style="left:0px;top:4.76px;font-size:18px;line-height:22px;color:#111;letter-spacing:0.2px;font-weight:400;">Dec</div></div>
</body></html>
